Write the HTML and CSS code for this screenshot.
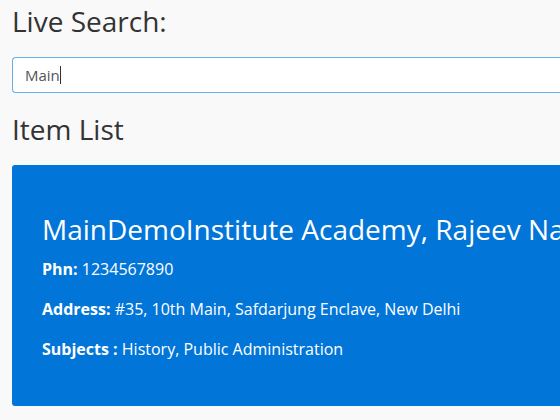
FILE: index.html
```html
<!DOCTYPE html>
<html>
<head>
<meta charset="utf-8">
<link rel="stylesheet" href="styles.css">
</head>
<body>
<div class="page">
  <h2 class="heading">Live Search:</h2>
  <div class="search"><span class="typed">Main</span><span class="caret"></span></div>
  <h2 class="heading list-heading">Item List</h2>
  <div class="card">
    <h3 class="card-title">MainDemoInstitute Academy, Rajeev Nagar, New Delhi</h3>
    <p class="line"><b>Phn:</b> 1234567890</p>
    <p class="line"><b>Address:</b> #35, 10th Main, Safdarjung Enclave, New Delhi</p>
    <p class="line"><b>Subjects :</b> History, Public Administration</p>
  </div>
</div>
</body>
</html>
```
FILE: styles.css
```css
html, body {
  margin: 0;
  padding: 0;
  background: #f9f9f9;
  overflow: hidden;
}
body {
  font-family: "Open Sans", "Noto Sans", sans-serif;
  color: #333;
  width: 560px;
  height: 420px;
}
.page {
  padding: 0 0 0 12px;
  width: 548px;
  overflow: hidden;
}
.heading {
  font-weight: 400;
  font-size: 28px;
  line-height: 28px;
  margin: 7px 0 0;
  color: #333;
}
.search {
  margin-top: 22px;
  margin-right: -20px;
  height: 36px;
  box-sizing: border-box;
  border: 1px solid #66afe9;
  border-right: none;
  border-radius: 4px 0 0 4px;
  background: #fff;
  display: flex;
  align-items: center;
  padding-left: 12px;
  font-size: 15px;
  color: #555;
}
.caret {
  display: inline-block;
  width: 1px;
  height: 18px;
  background: #333;
}
.list-heading {
  margin-top: 22px;
}
.card {
  margin-top: 22px;
  background: #0275d8;
  border-radius: 3px 0 0 3px;
  color: #fff;
  padding: 50px 0 0 30px;
  height: 241px;
  box-sizing: border-box;
  overflow: hidden;
}
.card-title {
  font-weight: 400;
  font-size: 28px;
  line-height: 28px;
  margin: 0 0 16px;
  white-space: nowrap;
}
.line {
  font-size: 16px;
  margin: 0 0 20px;
  line-height: 20px;
  white-space: nowrap;
}
.line b {
  font-weight: 700;
}
```
